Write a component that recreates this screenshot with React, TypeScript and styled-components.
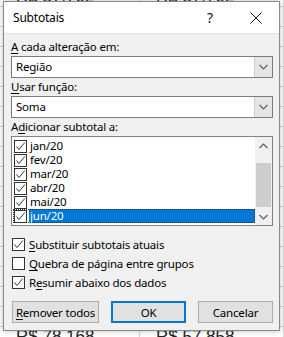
import React from "react";
import styled, { createGlobalStyle } from "styled-components";

const Global = createGlobalStyle`
  html, body { margin: 0; padding: 0; background: #fff; }
  body { width: 284px; height: 337px; overflow: hidden; font-family: "Noto Sans", "Segoe UI", sans-serif; }
`;

const Sheet = styled.div`
  position: relative;
  width: 284px;
  height: 337px;
  overflow: hidden;
  background: #fff;
`;

const SheetRows = styled.div`
  margin-top: -13px;
`;

const SheetRow = styled.div`
  display: grid;
  grid-template-columns: 140px 144px;
  height: 20px;
  border-bottom: 1px solid #d4d4d4;
  box-sizing: border-box;
`;

const SheetCell = styled.div`
  font-family: "Liberation Sans", Arial, sans-serif;
  font-size: 17px;
  color: #222;
  padding-left: 16px;
  line-height: 20px;
  border-right: 1px solid #d4d4d4;
`;

const Dialog = styled.div`
  position: absolute;
  left: 3px;
  top: 1px;
  width: 277px;
  height: 330px;
  box-sizing: border-box;
  border: 1px solid #8a8a8a;
  background: #f0f0f0;
  display: flex;
  flex-direction: column;
  box-shadow: 0 0 6px rgba(0,0,0,0.25);
  font-size: 11.5px;
  letter-spacing: -0.2px;
  color: #000;
`;

const TitleBar = styled.div`
  height: 31px;
  background: #fff;
  display: flex;
  align-items: center;
  padding-left: 9px;
  border-bottom: 1px solid #e3e3e3;
`;

const Title = styled.div`
  flex: 1;
  font-size: 12px;
`;

const TitleButton = styled.div`
  width: 46px;
  height: 31px;
  display: flex;
  align-items: center;
  justify-content: center;
  font-size: 14px;
  color: #111;
`;

const Body = styled.div`
  padding: 6px 6px 0 7px;
  display: flex;
  flex-direction: column;
`;

const Label = styled.div`
  height: 16px;
  line-height: 14px;
  box-sizing: border-box;
  padding-bottom: 2px;
  u { text-decoration: underline; text-underline-offset: 2px; }
`;

const Combo = styled.div`
  height: 22px;
  box-sizing: border-box;
  border: 1px solid #7a7a7a;
  background: #fff;
  display: flex;
  margin-bottom: 2px;
`;

const ComboText = styled.div`
  flex: 1;
  padding-left: 4px;
  line-height: 20px;
`;

const ComboButton = styled.div`
  width: 17px;
  background: #e5e5e5;
  border-left: 1px solid #cfcfcf;
  display: flex;
  align-items: center;
  justify-content: center;
`;

const ListBox = styled.div`
  height: 90px;
  box-sizing: border-box;
  border: 1px solid #828282;
  background: #fff;
  display: flex;
  margin-bottom: 9px;
`;

const Items = styled.div`
  flex: 1;
  padding: 2px 0 0 1px;
  display: flex;
  flex-direction: column;
`;

const Item = styled.div<{ $sel?: boolean }>`
  height: 14px;
  display: flex;
  align-items: center;
  box-sizing: border-box;
  outline: 1px dotted ${(p) => (p.$sel ? "#333" : "transparent")};
  outline-offset: -1px;
  padding-left: 1px;
`;

const ItemText = styled.span<{ $sel?: boolean }>`
  flex: 1;
  height: 14px;
  line-height: 14px;
  padding-left: 1px;
  margin-left: 2px;
  background: ${(p) => (p.$sel ? "#0078d7" : "transparent")};
  color: ${(p) => (p.$sel ? "#fff" : "#000")};
`;

const ScrollBar = styled.div`
  width: 17px;
  background: #f0f0f0;
  display: flex;
  flex-direction: column;
  align-items: center;
`;

const ScrollArrow = styled.div`
  height: 17px;
  width: 17px;
  display: flex;
  align-items: center;
  justify-content: center;
`;

const Track = styled.div`
  flex: 1;
  width: 15px;
  display: flex;
  flex-direction: column;
  justify-content: flex-end;
`;

const Thumb = styled.div`
  height: 44px;
  background: #cdcdcd;
  margin-bottom: 1px;
`;

const Box = styled.span`
  width: 13px;
  height: 13px;
  box-sizing: border-box;
  border: 1px solid #333;
  background: #fff;
  display: inline-flex;
  align-items: center;
  justify-content: center;
  flex: none;
`;

const OptionRow = styled.div`
  height: 19px;
  display: flex;
  align-items: center;
  gap: 4px;
  padding-left: 1px;
  u { text-decoration: underline; text-underline-offset: 2px; }
`;

const Buttons = styled.div`
  display: flex;
  justify-content: space-between;
  margin-top: 9px;
  padding-left: 1px;
`;

const Button = styled.div<{ $default?: boolean; $w: number }>`
  width: ${(p) => p.$w}px;
  height: 22px;
  box-sizing: border-box;
  border: ${(p) => (p.$default ? "2px solid #0078d7" : "1px solid #adadad")};
  background: #e1e1e1;
  display: flex;
  align-items: center;
  justify-content: center;
  white-space: nowrap;
  u { text-decoration: underline; text-underline-offset: 2px; }
`;

const Check = () => (
  <svg width="11" height="11" viewBox="0 0 11 11">
    <path d="M1.5 5.5 L4 8.5 L9.8 1.5" fill="none" stroke="#333" strokeWidth="1" />
  </svg>
);

const Chevron = ({ up }: { up?: boolean }) => (
  <svg width="9" height="6" viewBox="0 0 9 6">
    <path d={up ? "M0.5 5 L4.5 1 L8.5 5" : "M0.5 1 L4.5 5 L8.5 1"} fill="none" stroke="#606060" strokeWidth="1.2" />
  </svg>
);

const CheckBox = ({ checked }: { checked?: boolean }) => <Box>{checked && <Check />}</Box>;

const months = ["jan/20", "fev/20", "mar/20", "abr/20", "mai/20", "jun/20"];

export default function App() {
  const rows = Array.from({ length: 18 });
  return (
    <>
      <Global />
      <Sheet>
        <SheetRows>
          {rows.map((_, i) => (
            <SheetRow key={i}>
              <SheetCell>{i === 0 ? "R$ 57.702" : i === 17 ? "R$ 78.168" : ""}</SheetCell>
              <SheetCell>{i === 0 ? "R$ 57.702" : i === 17 ? "R$ 57.858" : ""}</SheetCell>
            </SheetRow>
          ))}
        </SheetRows>
        <Dialog>
          <TitleBar>
            <Title>Subtotais</Title>
            <TitleButton>?</TitleButton>
            <TitleButton>
              <svg width="12" height="12" viewBox="0 0 12 12">
                <path d="M0.5 0.5 L11.5 11.5 M11.5 0.5 L0.5 11.5" stroke="#111" strokeWidth="1" />
              </svg>
            </TitleButton>
          </TitleBar>
          <Body>
            <Label><u>A</u> cada alteração em:</Label>
            <Combo>
              <ComboText>Região</ComboText>
              <ComboButton><Chevron /></ComboButton>
            </Combo>
            <Label><u>U</u>sar função:</Label>
            <Combo>
              <ComboText>Soma</ComboText>
              <ComboButton><Chevron /></ComboButton>
            </Combo>
            <Label>A<u>d</u>icionar subtotal a:</Label>
            <ListBox>
              <Items>
                {months.map((m, i) => (
                  <Item key={m} $sel={i === 5}>
                    <CheckBox checked />
                    <ItemText $sel={i === 5}>{m}</ItemText>
                  </Item>
                ))}
              </Items>
              <ScrollBar>
                <ScrollArrow><Chevron up /></ScrollArrow>
                <Track><Thumb /></Track>
                <ScrollArrow><Chevron /></ScrollArrow>
              </ScrollBar>
            </ListBox>
            <OptionRow><CheckBox checked /><span><u>S</u>ubstituir subtotais atuais</span></OptionRow>
            <OptionRow><CheckBox /><span><u>Q</u>uebra de página entre grupos</span></OptionRow>
            <OptionRow><CheckBox checked /><span>R<u>e</u>sumir abaixo dos dados</span></OptionRow>
            <Buttons>
              <Button $w={87}><span><u>R</u>emover todos</span></Button>
              <Button $w={75} $default>OK</Button>
              <Button $w={75}>Cancelar</Button>
            </Buttons>
          </Body>
        </Dialog>
      </Sheet>
    </>
  );
}
